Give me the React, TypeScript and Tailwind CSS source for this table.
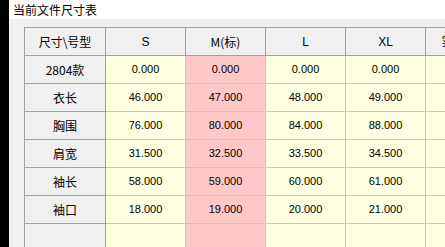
import React from "react";

const cols = ["S", "M(标)", "L", "XL", "实际尺寸"];
const rows: [string, string[]][] = [
  ["2804款", ["0.000", "0.000", "0.000", "0.000", ""]],
  ["衣长", ["46.000", "47.000", "48.000", "49.000", ""]],
  ["胸围", ["76.000", "80.000", "84.000", "88.000", ""]],
  ["肩宽", ["31.500", "32.500", "33.500", "34.500", ""]],
  ["袖长", ["58.000", "59.000", "60.000", "61.000", ""]],
  ["袖口", ["18.000", "19.000", "20.000", "21.000", ""]],
  ["", ["", "", "", "", ""]],
];

const cjk = { fontFamily: '"Noto Sans CJK SC", "Liberation Sans", sans-serif' };
const num = { fontFamily: '"Liberation Sans", "Noto Sans CJK SC", sans-serif' };

export default function App() {
  return (
    <div className="flex w-[445px] h-[247px] overflow-hidden bg-[#f0f0f0]">
      <div className="w-[9px] shrink-0 bg-black" />
      <div className="flex flex-col flex-1 min-w-0">
        <div className="h-[19px] shrink-0 bg-white pl-[4px] text-[12px] leading-[19px] text-black" style={cjk}>
          当前文件尺寸表
        </div>
        <div className="flex-1 pl-[15px] pt-[8px] overflow-hidden">
          <div className="grid grid-cols-[81px_80px_80px_80px_80px_80px] w-max border-l border-t border-[#a0a0a0]">
            <div className="h-[28px] border-r border-b border-[#a0a0a0] bg-[#f0f0f0] flex items-center justify-center text-[12px] text-black" style={cjk}>
              尺寸\号型
            </div>
            {cols.map((c, i) => (
              <div
                key={c}
                className="h-[28px] border-r border-b border-[#a0a0a0] bg-[#f0f0f0] flex items-center justify-center text-[12px] text-black whitespace-nowrap overflow-hidden"
                style={i === 1 ? cjk : num}
              >
                {c}
              </div>
            ))}
            {rows.map(([label, vals], r) => (
              <React.Fragment key={r}>
                <div className="h-[28px] border-r border-b border-[#a0a0a0] bg-[#f0f0f0] flex items-center justify-center text-[12px] text-black" style={cjk}>
                  {label}
                </div>
                {vals.map((v, i) => (
                  <div
                    key={i}
                    className={`h-[28px] border-r border-b border-[#c8c8c0] flex items-center justify-center text-[11px] text-black ${
                      i === 1 ? "bg-[#ffc8c8]" : "bg-[#ffffe1]"
                    }`}
                    style={num}
                  >
                    {v}
                  </div>
                ))}
              </React.Fragment>
            ))}
          </div>
        </div>
      </div>
    </div>
  );
}
